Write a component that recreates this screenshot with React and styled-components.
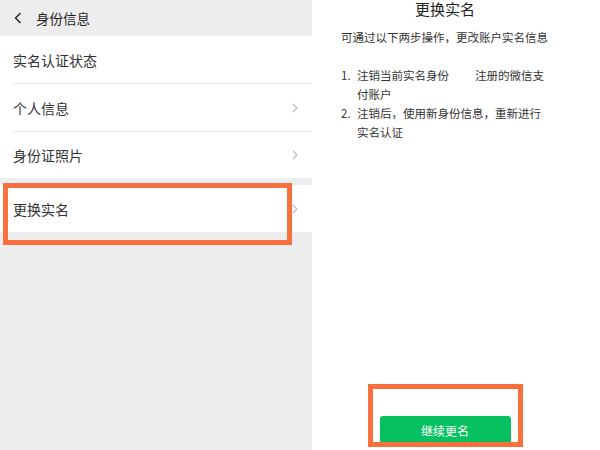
import React from "react";
import styled, { createGlobalStyle } from "styled-components";

const Global = createGlobalStyle`
  html, body { margin: 0; padding: 0; background: #ffffff; overflow: hidden; }
  body { font-family: "Noto Sans CJK SC", "Noto Sans", sans-serif; color: #333333; }
  * { box-sizing: border-box; }
`;

const Page = styled.div`
  display: flex;
  width: 600px;
  height: 450px;
  background: #ffffff;
`;

const LeftPanel = styled.div`
  width: 312px;
  height: 100%;
  background: #ededed;
  display: flex;
  flex-direction: column;
`;

const Header = styled.div`
  height: 36px;
  display: flex;
  align-items: center;
  padding-left: 14px;
  gap: 14px;
  font-size: 13.5px;
  color: #1f1f1f;
`;

const Group = styled.div`
  background: #ffffff;
  margin-bottom: ${(p) => p.$gap || 0}px;
`;

const Row = styled.div`
  position: relative;
  height: ${(p) => p.$h || 47}px;
  display: flex;
  align-items: center;
  justify-content: space-between;
  padding: 0 14px 0 13px;
  font-size: 14px;
  color: #333333;
  background: #ffffff;
`;

const Divider = styled.div`
  height: 1px;
  margin-left: 13px;
  background: #ececec;
`;

const Highlight = styled.div`
  position: absolute;
  left: ${(p) => p.$l}px;
  top: ${(p) => p.$t}px;
  width: ${(p) => p.$w}px;
  height: ${(p) => p.$h}px;
  border: 5px solid #f8703e;
  z-index: 2;
  pointer-events: none;
`;

const RightPanel = styled.div`
  flex: 1;
  height: 100%;
  padding-left: 29px;
`;

const Column = styled.div`
  width: 208px;
  height: 100%;
  display: flex;
  flex-direction: column;
  align-items: center;
`;

const Title = styled.div`
  font-size: 15px;
  line-height: 18px;
  margin-top: 0;
  color: #1f1f1f;
`;

const Subtitle = styled.div`
  align-self: stretch;
  font-size: 11.5px;
  line-height: 18px;
  margin-top: 10px;
  color: #333333;
  white-space: nowrap;
`;

const Steps = styled.ol`
  align-self: stretch;
  list-style: none;
  margin: 20px 0 0 0;
  padding: 0;
  display: flex;
  flex-direction: column;
`;

const Step = styled.li`
  display: grid;
  grid-template-columns: 16px 190px;
  font-size: 11.5px;
  line-height: 19px;
  color: #333333;
`;

const Blank = styled.span`
  display: inline-block;
  width: 26px;
`;

const ButtonWrap = styled.div`
  position: relative;
  margin-top: auto;
  margin-bottom: 6px;
`;

const Button = styled.button`
  width: 131px;
  height: 28px;
  border: none;
  border-radius: 3px;
  background: #07c160;
  color: #ffffff;
  font-family: inherit;
  font-size: 12px;
  padding: 0;
`;

const Back = () => (
  <svg width="8" height="12" viewBox="0 0 8 12">
    <polyline points="6.5,1 1.5,6 6.5,11" fill="none" stroke="#222" strokeWidth="1.4" />
  </svg>
);

const Chevron = () => (
  <svg width="6" height="10" viewBox="0 0 6 10">
    <polyline points="1,1 5,5 1,9" fill="none" stroke="#b8b8b8" strokeWidth="1.1" />
  </svg>
);

export default function App() {
  return (
    <>
      <Global />
      <Page>
        <LeftPanel>
          <Header>
            <Back />
            <span>身份信息</span>
          </Header>
          <Group $gap={7}>
            <Row $h={47}>实名认证状态</Row>
            <Divider />
            <Row $h={47}>
              个人信息
              <Chevron />
            </Row>
            <Divider />
            <Row $h={46}>
              身份证照片
              <Chevron />
            </Row>
          </Group>
          <Group>
            <Row $h={47}>
              更换实名
              <Chevron />
              <Highlight $l={3} $t={-2} $w={289} $h={62} />
            </Row>
          </Group>
        </LeftPanel>
        <RightPanel>
          <Column>
            <Title>更换实名</Title>
            <Subtitle>可通过以下两步操作，更改账户实名信息</Subtitle>
            <Steps>
              <Step>
                <span>1.</span>
                <span>
                  注销当前实名身份<Blank />注册的微信支付账户
                </span>
              </Step>
              <Step>
                <span>2.</span>
                <span>注销后，使用新身份信息，重新进行实名认证</span>
              </Step>
            </Steps>
            <ButtonWrap>
              <Button>继续更名</Button>
              <Highlight $l={-12} $t={-32} $w={155} $h={63} />
            </ButtonWrap>
          </Column>
        </RightPanel>
      </Page>
    </>
  );
}
